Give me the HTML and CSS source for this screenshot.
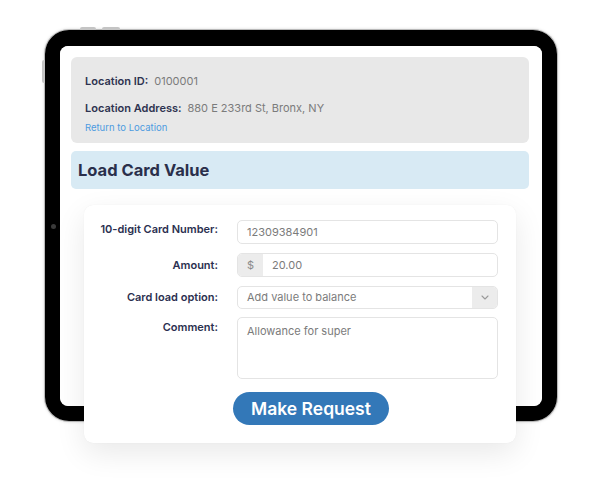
FILE: index.html
```html
<!DOCTYPE html>
<html lang="en">
<head>
<meta charset="utf-8">
<title>Load Card Value</title>
<link rel="stylesheet" href="styles.css">
</head>
<body>
<div class="tablet">
  <span class="btn-top btn-top-1"></span>
  <span class="btn-top btn-top-2"></span>
  <span class="btn-side"></span>
  <span class="camera"></span>
  <div class="screen">
    <section class="location">
      <p class="loc-row"><span class="loc-label">Location ID:</span><span class="loc-value">0100001</span></p>
      <p class="loc-row"><span class="loc-label">Location Address:</span><span class="loc-value">880 E 233rd St, Bronx, NY</span></p>
      <a class="loc-link" href="#">Return to Location</a>
    </section>
    <h1 class="title">Load Card Value</h1>
    <form class="form-card">
      <div class="grid">
        <label class="lbl lbl-top">10-digit Card Number:</label>
        <div class="field">12309384901</div>

        <label class="lbl">Amount:</label>
        <div class="field field-group"><span class="addon">$</span><span class="field-text">20.00</span></div>

        <label class="lbl">Card load option:</label>
        <div class="field field-group field-select"><span class="field-text grow">Add value to balance</span><span class="select-arrow"><svg width="8" height="5" viewBox="0 0 8 5"><path d="M1 1l3 3 3-3" fill="none" stroke="#9a9a9a" stroke-width="1.1" stroke-linecap="round" stroke-linejoin="round"/></svg></span></div>

        <label class="lbl lbl-top">Comment:</label>
        <div class="field field-area">Allowance for super</div>
      </div>
      <div class="actions">
        <button type="button" class="submit">Make Request</button>
      </div>
    </form>
  </div>
</div>
</body>
</html>
```

FILE: styles.css
```css
* { box-sizing: border-box; }
html, body { margin: 0; padding: 0; background: #ffffff; }
body {
  font-family: Inter, "Noto Sans", sans-serif;
  width: 600px;
  height: 487px;
  overflow: hidden;
  padding: 30px 0 0 45px;
}
.tablet {
  position: relative;
  width: 512px;
  height: 391px;
  border: 15px solid #000;
  border-top-width: 16px;
  border-radius: 24px;
  box-shadow: 0 0 0 1px #b9b9b9, 0 0 3px 1px rgba(0,0,0,0.15);
}
.btn-top {
  position: absolute;
  top: -19px;
  height: 3px;
  border-radius: 2px 2px 0 0;
  background: #c4c4c4;
}
.btn-top-1 { left: 20px; width: 16px; }
.btn-top-2 { left: 42px; width: 18px; }
.btn-side {
  position: absolute;
  left: -18px;
  top: 14px;
  width: 3px;
  height: 23px;
  border-radius: 2px 0 0 2px;
  background: #c4c4c4;
}
.camera {
  position: absolute;
  left: -9px;
  top: 178px;
  width: 5px;
  height: 5px;
  border-radius: 50%;
  background: #3a3a3a;
}
.screen {
  height: 100%;
  background: #fff;
  border-radius: 8px;
  padding: 11px 13px 0 11px;
}
.location {
  background: #e8e8e8;
  border-radius: 6px;
  height: 86px;
  padding: 17px 14px 0 14px;
}
.loc-row {
  margin: 0 0 12px 0;
  font-size: 11px;
  line-height: 15px;
}
.loc-label {
  color: #2e3350;
  font-weight: 600;
  margin-right: 6px;
}
.loc-value {
  color: #7b7b7b;
}
.loc-link {
  display: block;
  margin-top: -6px;
  font-size: 9.5px;
  line-height: 12px;
  color: #4d9be0;
  text-decoration: none;
}
.title {
  margin: 8px 0 0 0;
  height: 38px;
  background: #d8eaf4;
  border-radius: 5px;
  padding: 0 7px;
  font-size: 16.5px;
  line-height: 38px;
  font-weight: 700;
  color: #2a2f4b;
}
.form-card {
  position: relative;
  margin: 16px 13px 0 13px;
  height: 238px;
  background: #fff;
  border-radius: 9px;
  box-shadow: 0 10px 30px rgba(0,0,0,0.09), 0 0 1px rgba(0,0,0,0.08);
  padding: 15px 18px 0 0;
}
.grid {
  display: grid;
  grid-template-columns: 134px 1fr;
  column-gap: 19px;
  row-gap: 9px;
  align-items: center;
}
.lbl {
  text-align: right;
  font-size: 11px;
  line-height: 15px;
  font-weight: 600;
  color: #2b3050;
}
.lbl-top { align-self: start; padding-top: 2px; }
.field {
  height: 24px;
  border: 1px solid #e4e4e4;
  border-radius: 5px;
  padding: 0 9px;
  font-size: 11px;
  line-height: 22px;
  color: #7b7b7b;
}
.field-group {
  display: flex;
  padding: 0;
  overflow: hidden;
}
.field-select { height: 23px; line-height: 21px; }
.addon {
  width: 25px;
  flex: none;
  background: #ececec;
  text-align: center;
  color: #8a8a8a;
}
.field-text { padding: 0 9px; }
.grow { flex: 1; }
.select-arrow {
  width: 25px;
  flex: none;
  background: #ececec;
  display: flex;
  align-items: center;
  justify-content: center;
}
.field-area {
  height: 62px;
  margin-top: -1px;
  padding-top: 2px;
}
.actions {
  padding: 13px 0 0 149px;
}
.submit {
  width: 156px;
  height: 33px;
  border: 0;
  border-radius: 17px;
  background: #3378b8;
  color: #fff;
  font-family: Inter, "Noto Sans", sans-serif;
  font-size: 17.5px;
  font-weight: 600;
  padding: 0;
  cursor: pointer;
}
```
